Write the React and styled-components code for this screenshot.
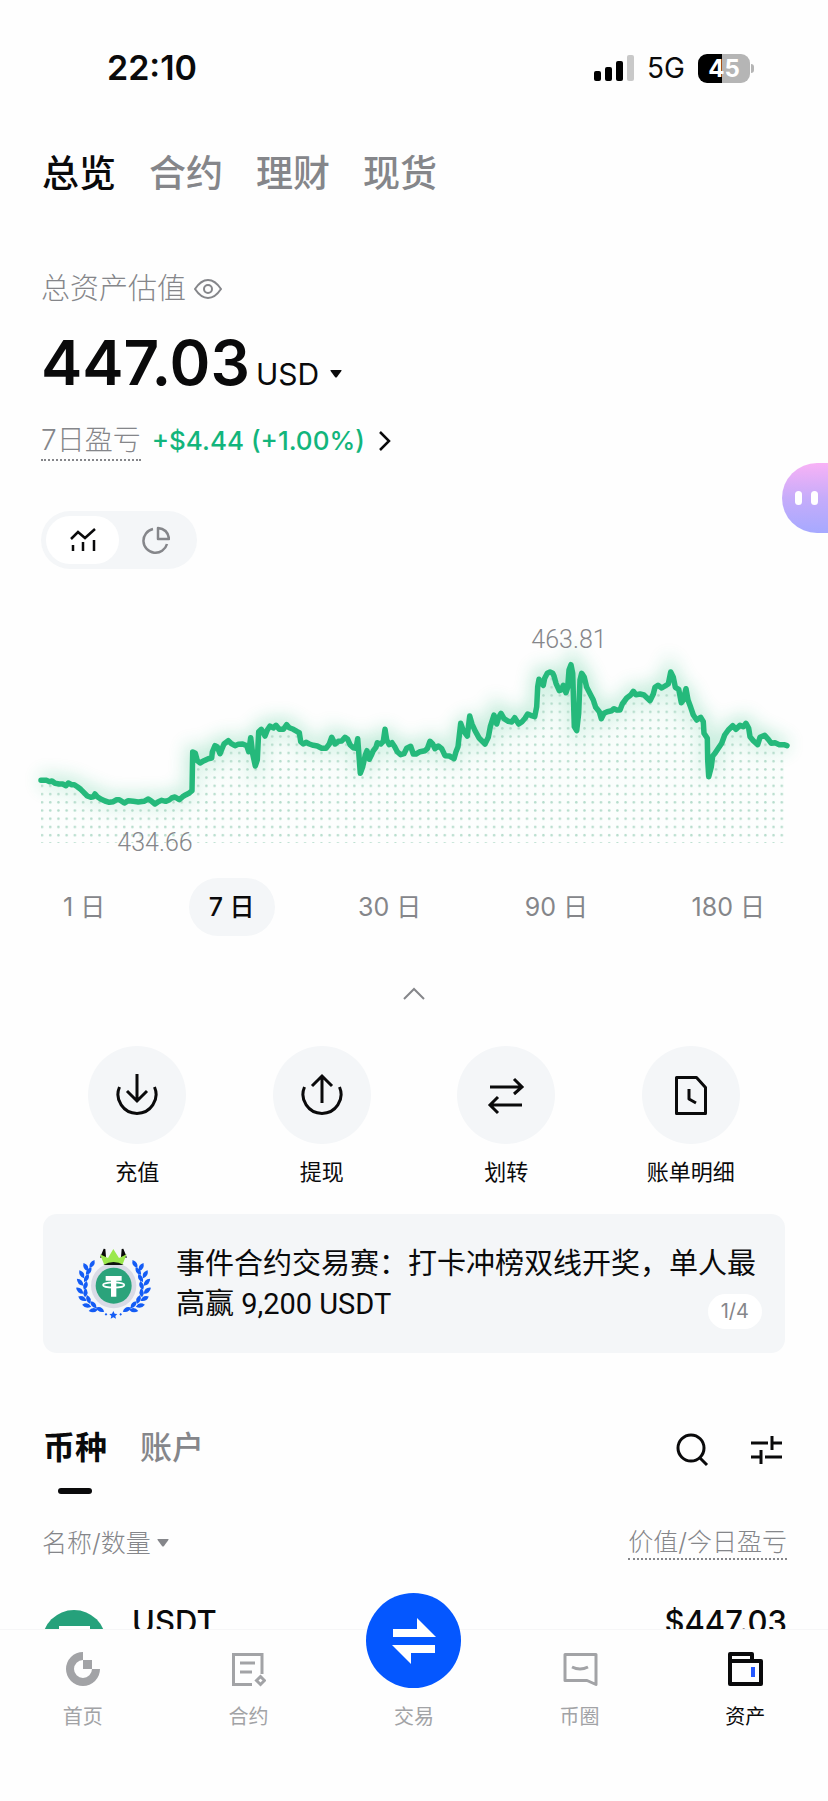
/* -------------------------------------------------------------------------- */
/*                            External Dependencies                           */
/* -------------------------------------------------------------------------- */
import React, { useState } from "react";
import styled, { createGlobalStyle } from "styled-components";

const GREY = "#85868a";
const GREEN = "#12b57c";
const SOFT = "#f4f6f8";

/* ---------------------------------- Data ---------------------------------- */
const accountTabs = ["总览", "合约", "理财", "现货"];
const periods = ["1 日", "7 日", "30 日", "90 日", "180 日"];

// x,y samples of the 7 day balance, three units to a pixel
const balanceSeries = `63,541 80,541 88,545 96,543 105,550 118,552 128,552 138,557 145,549
155,554 163,554 172,560 182,568 192,578 202,588 212,592 220,590 225,582 232,590 242,597
255,603 268,607 280,605 290,599 298,599 305,604 313,609 325,602 340,604 355,606 372,604
385,597 395,604 405,612 415,605 425,601 437,604 448,600 455,594 465,591 478,599 488,590
498,584 508,579 516,572 518,456 526,460 532,482 540,489 552,482 565,476 575,474 577,456
585,437 592,441 600,461 606,446 612,432 625,422 633,430 645,437 655,433 668,432 680,437
686,455 692,413 698,462 706,498 712,480 716,395 724,388 735,408 742,390 750,378 760,384
768,376 778,388 790,388 800,374 808,383 820,388 832,395 838,398 842,425 850,432 858,427
868,432 880,436 892,438 905,445 918,445 928,432 935,412 945,432 955,424 965,423 975,412
983,418 990,434 1000,443 1008,445 1013,416 1018,480 1021,520 1028,500 1036,465 1041,452
1048,478 1054,466 1060,452 1068,442 1072,428 1082,432 1090,424 1095,388 1100,420 1108,434
1116,428 1124,440 1132,455 1142,464 1152,461 1160,445 1172,439 1180,462 1188,462 1200,455
1215,452 1222,446 1230,424 1238,432 1245,446 1255,438 1265,446 1275,467 1288,468 1302,476
1308,455 1314,440 1322,370 1330,392 1342,408 1349,348 1356,372 1365,392 1378,415 1395,432
1405,412 1411,380 1422,345 1430,372 1436,352 1443,340 1452,356 1465,364 1475,366 1484,353
1496,372 1506,365 1515,355 1523,342 1532,346 1544,350 1550,320 1553,260 1557,238 1564,248
1570,256 1574,235 1582,220 1590,216 1598,220 1602,228 1608,250 1618,272 1624,270 1630,256
1638,278 1643,262 1647,210 1653,194 1658,220 1663,380 1670,392 1676,340 1680,240 1685,220
1693,232 1700,262 1712,285 1720,300 1727,322 1738,335 1744,356 1752,340 1762,335 1775,332
1782,326 1790,330 1800,330 1807,312 1820,294 1832,285 1840,274 1848,284 1860,282 1872,285
1890,302 1900,282 1905,262 1914,256 1925,264 1935,258 1945,252 1952,216 1960,232 1966,262
1976,268 1984,308 1990,300 1998,266 2004,300 2012,322 2020,345 2030,360 2042,352 2050,365
2052,400 2062,415 2063,480 2066,530 2074,500 2078,468 2085,460 2095,445 2105,430 2114,405
2125,390 2138,377 2148,388 2160,376 2170,380 2178,370 2186,385 2190,410 2200,422 2213,434
2220,412 2234,406 2245,418 2254,430 2265,428 2278,434 2292,434 2301,437`
  .trim()
  .split(/\s+/)
  .map((pair) => pair.split(",").map((n) => Number(n) / 3));

const linePath = balanceSeries
  .map(([x, y], i) => `${i ? "L" : "M"}${(x + 20).toFixed(1)} ${y.toFixed(1)}`)
  .join(" ");

/* ---------------------------------- Icons --------------------------------- */
const Stroke = ({ size = 44, width = 3, children, ...rest }) => (
  <svg
    width={size}
    height={size}
    viewBox={`0 0 ${size} ${size}`}
    fill="none"
    stroke="currentColor"
    strokeWidth={width}
    aria-hidden="true"
    {...rest}
  >
    {children}
  </svg>
);

const EyeIcon = () => (
  <Stroke size={28} width={2}>
    <path d="M1 14C5 8 9 5 14 5s9 3 13 9c-4 6-8 9-13 9S5 20 1 14Z" strokeLinejoin="round" />
    <circle cx="14" cy="14" r="4" />
  </Stroke>
);

const Caret = ({ size = 12 }) => (
  <svg width={size} height="8" viewBox="0 0 12 8" aria-hidden="true">
    <path d="M1 0h10q1 0 .4 1L7 7q-1 1-2 0L.6 1Q0 0 1 0Z" fill="currentColor" />
  </svg>
);

const DepositIcon = () => (
  <Stroke>
    <path d="M4.500 14a19 19 0 1 0 35 0" />
    <path d="M22 1v27M12 18l10 10 10-10" />
  </Stroke>
);

const WithdrawIcon = () => (
  <Stroke>
    <path d="M4.500 14a19 19 0 1 0 35 0" />
    <path d="M22 30V3M12 13L22 3l10 10" />
  </Stroke>
);

const TransferIcon = () => (
  <Stroke>
    <path d="M6 14h32M30 6l8 8-8 7M38 32H6M14 24l-8 8 8 8" />
  </Stroke>
);

const BillIcon = () => (
  <Stroke strokeLinejoin="round">
    <path d="M7.500 4.500h20l9 10v26h-29Z" />
    <path d="M20 16v10l7 4" />
  </Stroke>
);

const HomeIcon = () => (
  <Stroke size={36} stroke="none">
    <path
      fill="currentColor"
      d="M18 1v8a9 9 0 1 0 9 9h8A17 17 0 1 1 18 1Z"
    />
    <path fill="currentColor" d="M18 9h9v9h-9Z" />
  </Stroke>
);

const ContractIcon = () => (
  <Stroke size={36} width={3}>
    <path d="M32 23V3.500H3.500v30H22M10 12h15M10 21h12" />
    <path d="M30.500 25.500l4 4-4 4-4-4Z" />
  </Stroke>
);

const CircleIcon = () => (
  <Stroke size={36} width={3} strokeLinejoin="round">
    <path d="M3 3.500h31v30l-9-4H3Z" />
    <path d="M10 16q8 4 16 0" />
  </Stroke>
);

const WalletIcon = () => (
  <Stroke size={36} width={4} strokeLinejoin="round">
    <path d="M3 10h31v23H3ZM3 10V3h22v7" />
    <path d="M26 16v10" stroke="#2457ff" />
  </Stroke>
);

const laurel = [
  [66, 75, 32], [47, 84, -28], [56, 96, 35], [35, 106, -30], [49, 117, 30],
  [30, 130, -42], [46, 139, 18], [29, 155, -50], [46, 161, 4], [37, 179, -62],
  [55, 181, -18], [50, 200, -78], [70, 197, -42], [70, 214, -98], [90, 212, -64],
];

const TrophyCoin = () => (
  <svg width="90" height="90" viewBox="0 0 270 270" aria-hidden="true">
    {[1, -1].map((side) => (
      <g
        key={side}
        fill="#145cf5"
        transform={side < 0 ? "translate(261 0) scale(-1 1)" : undefined}
      >
        {laurel.map(([x, y, turn]) => (
          <path
            key={`${x}-${y}`}
            transform={`translate(${x} ${y}) rotate(${turn})`}
            d="M0-14Q14 0 0 14Q-12 0 0-14Z"
          />
        ))}
      </g>
    ))}
    <circle cx="131" cy="140" r="68" fill="#d9dbe6" />
    <circle cx="131" cy="140" r="54" fill="#2ba37b" />
    <path d="M107 111h48v14h-16v48h-16v-48h-16Z" fill="#fff" />
    <ellipse cx="131" cy="138" rx="32" ry="8" fill="none" stroke="#fff" strokeWidth="5" />
    <path d="M101 29l5 1 2 24-18 2ZM160 29l-5 1-2 24 18 2Z" fill="#080808" />
    <path
      d="M90 46l24 11 16-27 17 27 23-11-13 32q-27-12-54 0Z"
      fill="#9be84d"
    />
    <path d="M100 78q31-18 61 0Z" fill="#101410" />
    <path
      d="M130 216l4 8 8 1-6 6 2 8-8-4-8 4 2-8-6-6 8-1ZM108 222l4 4-4 4-4-4ZM152 222l4 4-4 4-4-4Z"
      fill="#145cf5"
    />
  </svg>
);

const TetherIcon = () => (
  <svg width="64" height="64" viewBox="0 0 64 64" aria-hidden="true">
    <circle cx="32" cy="32" r="32" fill="#26a17b" />
    <path d="M17 16h31v9H37v25h-9V25H17Z" fill="#fff" />
    <ellipse cx="32" cy="32" rx="20" ry="5" fill="none" stroke="#fff" strokeWidth="2" />
  </svg>
);

/* ------------------------------- Status bar ------------------------------- */
const StatusBar = () => (
  <StatusRow>
    <Clock>22:10</Clock>
    <StatusRight>
      <svg width="42" height="28" viewBox="0 0 42 28" aria-hidden="true">
        <rect x="1" y="17" width="7" height="10" rx="2" />
        <rect x="12" y="13" width="7" height="14" rx="2" />
        <rect x="23" y="7" width="7" height="20" rx="2" />
        <rect x="34" y="1" width="7" height="26" rx="2" fill="#c9c9c9" />
      </svg>
      <Network>5G</Network>
      <Battery>45</Battery>
    </StatusRight>
  </StatusRow>
);

/* ---------------------------------- Chart --------------------------------- */
const BalanceChart = () => (
  <ChartSvg viewBox="0 0 828 260" role="img" aria-label="7 日资产走势">
    <defs>
      <pattern id="dots" x="38" y="1" width="8.220" height="8.220" patternUnits="userSpaceOnUse">
        <circle cx="4" cy="4" r="1.300" fill="#b4dccb" />
      </pattern>
      <linearGradient id="fade" x1="0" y1="0" x2="0" y2="1">
        <stop offset="0" stopColor="#e3f8ef" />
        <stop offset="1" stopColor="#fdfffe" />
      </linearGradient>
      <filter id="glow" x="-10%" y="-40%" width="120%" height="180%">
        <feGaussianBlur stdDeviation="9" />
      </filter>
    </defs>
    <path d={linePath} fill="none" stroke="#25bd7c" strokeWidth="12" opacity="0.3" filter="url(#glow)" />
    <path d={`${linePath} L784 146 V243 H41 V180 Z`} fill="url(#fade)" opacity="0.4" />
    <path d={`${linePath} L784 146 V243 H41 V180 Z`} fill="url(#dots)" />
    <path
      d={linePath}
      fill="none"
      stroke="#25b97b"
      strokeWidth="5.5"
      strokeLinejoin="round"
      strokeLinecap="round"
    />
    <ChartText x="569" y="48">463.81</ChartText>
    <ChartText x="155" y="251">434.66</ChartText>
  </ChartSvg>
);

/* ----------------------------------- App ---------------------------------- */
const App = () => {
  const [tab, setTab] = useState("总览");
  const [period, setPeriod] = useState("7 日");
  const [view, setView] = useState("trend");
  const [assetTab, setAssetTab] = useState("币种");

  return (
    <>
      <GlobalStyle />
      <Page>
        <StatusBar />

        <AccountTabs>
          {accountTabs.map((name) => (
            <AccountTab key={name} $active={name === tab} onClick={() => setTab(name)}>
              {name}
            </AccountTab>
          ))}
        </AccountTabs>

        <Summary>
          <SummaryLabel>
            总资产估值
            <IconButton aria-label="隐藏资产">
              <EyeIcon />
            </IconButton>
          </SummaryLabel>
          <BalanceRow>
            <Balance>447.03</Balance>
            <Currency>
              <select aria-label="计价货币" defaultValue="USD">
                <option>USD</option>
              </select>
              <Caret />
            </Currency>
          </BalanceRow>
          <ProfitLink href="#profit">
            <ProfitLabel>7日盈亏</ProfitLabel>
            <ProfitValue>+$4.44 (+1.00%)</ProfitValue>
            <Stroke size={20} width={2.5}>
              <path d="M5 1l9 9-9 9" />
            </Stroke>
          </ProfitLink>
          <ViewSwitch>
            <ViewButton
              aria-label="走势"
              $active={view === "trend"}
              onClick={() => setView("trend")}
            >
              <Stroke size={28} width={2.5}>
                <path d="M2 13l7-7 7 6L26 3M4 25v-6M14 25v-9M25 25V14" />
              </Stroke>
            </ViewButton>
            <ViewButton
              aria-label="分布"
              $active={view === "share"}
              onClick={() => setView("share")}
            >
              <Stroke size={28} width={2.5} strokeLinejoin="round">
                <path d="M11 3a12 12 0 1 0 14 15M16 2q10 1 11 11H16Z" />
              </Stroke>
            </ViewButton>
          </ViewSwitch>
        </Summary>

        <BalanceChart />

        <Periods>
          {periods.map((name) => (
            <PeriodButton
              key={name}
              $active={name === period}
              onClick={() => setPeriod(name)}
            >
              {name}
            </PeriodButton>
          ))}
        </Periods>

        <CollapseButton aria-label="收起">
          <Stroke size={24} width={2}>
            <path d="M2 17l10-10 10 10" />
          </Stroke>
        </CollapseButton>

        <Actions>
          <Action href="#deposit">
            <ActionCircle><DepositIcon /></ActionCircle>
            充值
          </Action>
          <Action href="#withdraw">
            <ActionCircle><WithdrawIcon /></ActionCircle>
            提现
          </Action>
          <Action href="#transfer">
            <ActionCircle><TransferIcon /></ActionCircle>
            划转
          </Action>
          <Action href="#bills">
            <ActionCircle><BillIcon /></ActionCircle>
            账单明细
          </Action>
        </Actions>

        <Banner href="#event">
          <TrophyCoin />
          <BannerText>事件合约交易赛：打卡冲榜双线开奖，单人最高赢 9,200 USDT</BannerText>
          <BannerCount>1/4</BannerCount>
        </Banner>

        <AssetBar>
          {["币种", "账户"].map((name) => (
            <AssetTab
              key={name}
              $active={name === assetTab}
              onClick={() => setAssetTab(name)}
            >
              {name}
            </AssetTab>
          ))}
          <AssetTools>
            <IconButton aria-label="搜索">
              <Stroke size={36} width={3}>
                <circle cx="17" cy="17" r="13" />
                <path d="M26 27l7 7" />
              </Stroke>
            </IconButton>
            <IconButton aria-label="筛选">
              <Stroke size={36} width={3}>
                <path d="M3 12h17M24 5v14M24 12h10M3 26h9M13 19v14M17 26h17" />
              </Stroke>
            </IconButton>
          </AssetTools>
        </AssetBar>

        <AssetTable>
          <thead>
            <tr>
              <th scope="col">
                <SortButton>
                  名称/数量 <Caret />
                </SortButton>
              </th>
              <th scope="col">
                <Dotted>价值/今日盈亏</Dotted>
              </th>
            </tr>
          </thead>
          <tbody>
            <tr>
              <td>
                <Coin>
                  <TetherIcon />
                  USDT
                </Coin>
              </td>
              <td>$447.03</td>
            </tr>
          </tbody>
        </AssetTable>
      </Page>

      <Assistant aria-label="智能助手">
        <i />
        <i />
      </Assistant>

      <BottomNav>
        <NavLink href="#home"><HomeIcon />首页</NavLink>
        <NavLink href="#contract"><ContractIcon />合约</NavLink>
        <NavLink href="#trade">
          <NavSpace />
          交易
          <TradeCircle>
            <svg width="52" height="48" viewBox="0 0 52 48" fill="#fff" aria-hidden="true">
              <path d="M5 12h24V1l19 19H5ZM47 28H4l19 19V36h24Z" />
            </svg>
          </TradeCircle>
        </NavLink>
        <NavLink href="#circle"><CircleIcon />币圈</NavLink>
        <NavLink href="#assets" aria-current="page"><WalletIcon />资产</NavLink>
      </BottomNav>
    </>
  );
};

/* --------------------------------- Styles --------------------------------- */
const GlobalStyle = createGlobalStyle`
  *, *::before, *::after {
    box-sizing: border-box;
  }
  body {
    margin: 0;
    background: #fefefe;
    color: #0a0a0b;
    font-family: Inter, "Noto Sans CJK SC", sans-serif;
  }
  button, select {
    margin: 0;
    padding: 0;
    border: 0;
    background: none;
    color: inherit;
    font: inherit;
    cursor: pointer;
  }
  a {
    color: inherit;
    text-decoration: none;
  }
  svg {
    display: block;
    flex: none;
  }
`;

const Page = styled.main`
  display: flex;
  flex-direction: column;
  height: 100vh;
  overflow: hidden;
`;

const StatusRow = styled.header`
  flex: none;
  display: flex;
  align-items: center;
  justify-content: space-between;
  padding: 48px 73px 0 107px;
  height: 88px;
`;

const Clock = styled.time`
  font-size: 34px;
  font-weight: 600;
  line-height: 40px;
`;

const StatusRight = styled.div`
  display: flex;
  align-items: center;
`;

const Network = styled.span`
  margin: 0 13px 0 12px;
  font-size: 28px;
  line-height: 40px;
`;

const Battery = styled.span`
  position: relative;
  width: 52px;
  height: 29px;
  margin-right: 5px;
  border-radius: 9px;
  background: linear-gradient(90deg, #000 46%, #b5b5b5 46%);
  color: #fff;
  font-size: 24px;
  font-weight: 700;
  line-height: 29px;
  text-align: center;
  &::after {
    content: "";
    position: absolute;
    top: 10px;
    right: -4px;
    width: 3px;
    height: 9px;
    border-radius: 0 3px 3px 0;
    background: #b5b5b5;
  }
`;

const AccountTabs = styled.nav`
  flex: none;
  display: flex;
  gap: 33px;
  padding: 61px 42px 0;
`;

const AccountTab = styled.button`
  color: ${({ $active }) => ($active ? "#0a0a0b" : GREY)};
  font-size: 37px;
  font-weight: 500;
  line-height: 50px;
`;

const Summary = styled.section`
  flex: none;
  display: flex;
  flex-direction: column;
  align-items: flex-start;
  padding: 70px 41px 0;
`;

const SummaryLabel = styled.div`
  display: flex;
  align-items: center;
  gap: 8px;
  color: ${GREY};
  font-size: 29px;
  font-weight: 300;
  line-height: 40px;
`;

const IconButton = styled.button`
  display: flex;
`;

const BalanceRow = styled.div`
  display: flex;
  align-items: baseline;
  gap: 6px;
  margin-top: 14px;
`;

const Balance = styled.strong`
  font-size: 62px;
  font-weight: 600;
  line-height: 80px;
`;

const Currency = styled.label`
  display: flex;
  align-items: center;
  gap: 10px;
  font-size: 30px;
  line-height: 40px;
  select {
    appearance: none;
  }
`;

const ProfitLink = styled.a`
  display: flex;
  align-items: center;
  margin-top: 18px;
`;

const ProfitLabel = styled.span`
  border-bottom: 2px dotted ${GREY};
  color: ${GREY};
  font-size: 28px;
  font-weight: 300;
  line-height: 38px;
`;

const ProfitValue = styled.span`
  margin: 0 10px 0 11px;
  color: ${GREEN};
  font-size: 26px;
  font-weight: 500;
  line-height: 40px;
`;

const ViewSwitch = styled.div`
  display: flex;
  margin-top: 50px;
  padding: 5px;
  border-radius: 29px;
  background: ${SOFT};
`;

const ViewButton = styled.button`
  display: flex;
  align-items: center;
  justify-content: center;
  width: 73px;
  height: 48px;
  border-radius: 24px;
  background: ${({ $active }) => ($active ? "#fff" : "transparent")};
  color: ${({ $active }) => ($active ? "#0a0a0b" : GREY)};
`;

const ChartSvg = styled.svg`
  width: 100%;
  height: auto;
  margin-top: 31px;
`;

const ChartText = styled.text`
  fill: ${GREY};
  font-family: Roboto, sans-serif;
  font-size: 25px;
  font-weight: 300;
  text-anchor: middle;
`;

const Periods = styled.div`
  flex: none;
  display: flex;
  justify-content: space-between;
  margin: 18px 43px 0;
`;

const PeriodButton = styled.button`
  padding: 0 20px;
  border-radius: 29px;
  background: ${({ $active }) => ($active ? SOFT : "transparent")};
  color: ${({ $active }) => ($active ? "#0a0a0b" : GREY)};
  font-size: 25px;
  font-weight: ${({ $active }) => ($active ? 500 : 400)};
  line-height: 58px;
`;

const CollapseButton = styled.button`
  flex: none;
  align-self: center;
  margin-top: 46px;
  color: ${GREY};
`;

const Actions = styled.nav`
  flex: none;
  display: grid;
  grid-template-columns: repeat(4, 1fr);
  margin: 40px 45px 0;
`;

const Action = styled.a`
  display: flex;
  flex-direction: column;
  align-items: center;
  gap: 12px;
  font-size: 22px;
  line-height: 32px;
`;

const ActionCircle = styled.span`
  display: flex;
  align-items: center;
  justify-content: center;
  width: 98px;
  height: 98px;
  border-radius: 50%;
  background: ${SOFT};
`;

const Banner = styled.a`
  flex: none;
  display: flex;
  align-items: center;
  gap: 16px;
  margin: 26px 43px 0;
  padding: 25px 22px 24px 27px;
  position: relative;
  border-radius: 14px;
  background: ${SOFT};
`;

const BannerText = styled.p`
  margin: 0;
  font-family: Roboto, "Noto Sans CJK SC", sans-serif;
  font-size: 29px;
  line-height: 40px;
`;

const BannerCount = styled.span`
  position: absolute;
  right: 23px;
  bottom: 24px;
  padding: 0 13px;
  border-radius: 18px;
  background: #fff;
  color: ${GREY};
  font-size: 20px;
  line-height: 35px;
`;

const AssetBar = styled.div`
  flex: none;
  display: flex;
  align-items: flex-start;
  gap: 33px;
  margin: 71px 44px 0 43px;
`;

const AssetTab = styled.button`
  display: flex;
  flex-direction: column;
  align-items: center;
  color: ${({ $active }) => ($active ? "#0a0a0b" : GREY)};
  font-size: 32px;
  font-weight: ${({ $active }) => ($active ? 700 : 500)};
  line-height: 48px;
  &::after {
    content: "";
    width: 34px;
    height: 6px;
    margin-top: 16px;
    border-radius: 3px;
    background: ${({ $active }) => ($active ? "#0a0a0b" : "transparent")};
  }
`;

const AssetTools = styled.div`
  display: flex;
  gap: 38px;
  margin: 7px 0 0 auto;
`;

const AssetTable = styled.table`
  flex: none;
  width: calc(100% - 83px);
  margin: 31px 41px 0 42px;
  border-collapse: collapse;
  th {
    padding: 0;
    color: ${GREY};
    font-size: 25px;
    font-weight: 300;
    text-align: left;
  }
  td {
    padding: 49px 0 0;
    font-size: 31px;
    font-weight: 500;
    line-height: 24px;
    vertical-align: top;
  }
  th:last-child,
  td:last-child {
    text-align: right;
  }
`;

const SortButton = styled.button`
  display: flex;
  align-items: center;
  gap: 6px;
  line-height: 36px;
`;

const Dotted = styled.span`
  display: inline-block;
  border-bottom: 2px dotted ${GREY};
  line-height: 32px;
`;

const Coin = styled.div`
  display: flex;
  gap: 26px;
`;

const Assistant = styled.button`
  position: fixed;
  top: 463px;
  right: 0;
  display: flex;
  align-items: center;
  gap: 9px;
  width: 46px;
  height: 70px;
  padding-left: 13px;
  border-radius: 35px 0 0 35px;
  background: linear-gradient(#f8b2f6, #c6acfa 50%, #a6a9ff);
  i {
    width: 7px;
    height: 14px;
    border-radius: 4px;
    background: #fff;
  }
`;

const BottomNav = styled.nav`
  position: fixed;
  right: 0;
  bottom: 0;
  left: 0;
  display: grid;
  grid-template-columns: repeat(5, 1fr);
  padding: 21px 0 69px;
  border-top: 1px solid #f6f6f7;
  background: #fefefe;
`;

const NavLink = styled.a`
  position: relative;
  display: flex;
  flex-direction: column;
  align-items: center;
  gap: 15px;
  color: #a2a3a6;
  font-size: 20px;
  line-height: 30px;
  &[aria-current] {
    color: #0a0a0b;
  }
`;

const NavSpace = styled.span`
  height: 36px;
`;

const TradeCircle = styled.span`
  position: absolute;
  top: -58px;
  display: flex;
  align-items: center;
  justify-content: center;
  width: 95px;
  height: 95px;
  border-radius: 50%;
  background: #0457ff;
`;

export default App;
